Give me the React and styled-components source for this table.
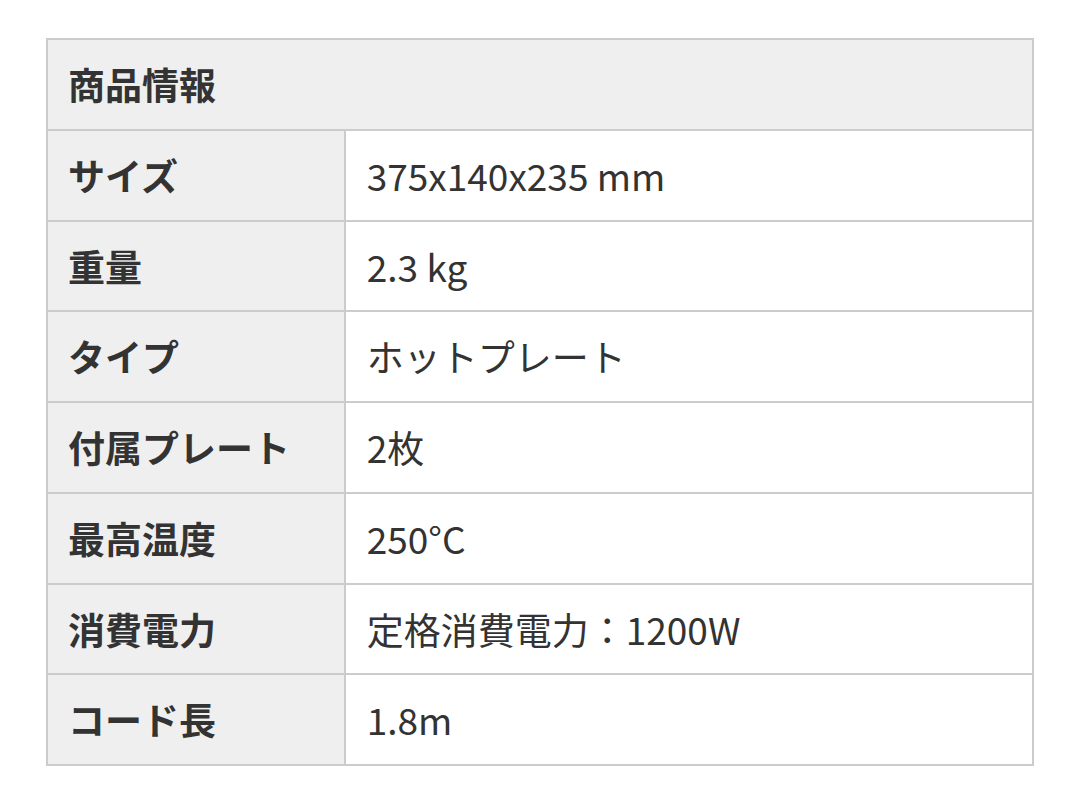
import React from "react";
import styled, { createGlobalStyle } from "styled-components";

const Global = createGlobalStyle`
  html, body { margin: 0; padding: 0; background: #fff; }
  body { font-family: "Noto Sans CJK JP", "Noto Sans", sans-serif; color: #333; }
`;

const Page = styled.div`
  padding: 38px 46px;
`;

const Table = styled.table`
  width: 100%;
  border-collapse: collapse;
  border: 2px solid #ccc;
  font-size: 37px;
  line-height: 48.75px;
`;

const HeadCell = styled.th`
  background: #efefef;
  border: 2px solid #ccc;
  padding: 20px 20px;
  text-align: left;
  font-weight: 700;
  color: #333;
`;

const Label = styled.th`
  width: 30.2%;
  background: #efefef;
  border: 2px solid #ccc;
  padding: 20px 20px;
  text-align: left;
  font-weight: 700;
  color: #333;
  white-space: nowrap;
`;

const Value = styled.td`
  background: #fff;
  border: 2px solid #ccc;
  padding: 20px 21px;
  font-weight: 400;
  color: #333;
`;

const rows = [
  ["サイズ", "375x140x235 mm"],
  ["重量", "2.3 kg"],
  ["タイプ", "ホットプレート"],
  ["付属プレート", "2枚"],
  ["最高温度", "250°C"],
  ["消費電力", "定格消費電力：1200W"],
  ["コード長", "1.8m"],
];

export default function App() {
  return (
    <>
      <Global />
      <Page>
        <Table>
          <thead>
            <tr>
              <HeadCell colSpan={2}>商品情報</HeadCell>
            </tr>
          </thead>
          <tbody>
            {rows.map(([k, v]) => (
              <tr key={k}>
                <Label>{k}</Label>
                <Value>{v}</Value>
              </tr>
            ))}
          </tbody>
        </Table>
      </Page>
    </>
  );
}
